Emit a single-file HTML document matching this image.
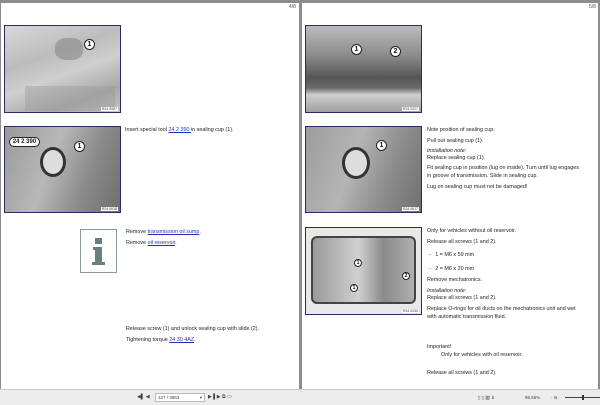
<!DOCTYPE html>
<html><head><style>
*{margin:0;padding:0;box-sizing:border-box}
body{width:600px;height:405px;background:#8c8c8c;position:relative;overflow:hidden;font-family:"Liberation Sans",sans-serif;font-size:5.4px;color:#222}
.page{position:absolute;top:3px;height:386px;background:#fff}
.pn{position:absolute;top:4px;font-size:5px;color:#555}
.img{position:absolute;border:1.5px solid #2b2b66;overflow:hidden}
.lab{position:absolute;right:2px;bottom:1px;background:#fff;font-size:3.5px;padding:0 1px;color:#333}
.c{position:absolute;width:11px;height:11px;border-radius:50%;background:#fff;border:1px solid #222;font:bold 7px "Liberation Sans",sans-serif;text-align:center;line-height:9px;color:#111}
.t{position:absolute;line-height:7px;white-space:nowrap}
a{color:#2233bb;text-decoration:underline}
.tb{position:absolute;left:0;top:389px;width:600px;height:16px;background:#ececec;border-top:1px solid #ccc;font-size:4.5px;color:#444}
</style></head><body>
<div class="page" style="left:1px;width:298px"></div>
<div class="page" style="left:302px;width:296px"></div>
<div class="pn" style="left:289px">4/8</div>
<div class="pn" style="left:589px">5/8</div>

<div class="img" style="left:4px;top:25px;width:117px;height:88px;background:linear-gradient(160deg,#d8d8d8 0%,#bcbcbc 35%,#cfcfcf 55%,#a8a8a8 80%,#c4c4c4 100%)">
<div style="position:absolute;left:50px;top:12px;width:28px;height:22px;background:#888;border-radius:40%;opacity:.6"></div>
<div style="position:absolute;left:20px;top:60px;width:90px;height:25px;background:#999;opacity:.4"></div>
<div class="c" style="left:79px;top:13px">1</div><div class="lab">R24 0587</div></div>
<div class="img" style="left:4px;top:126px;width:117px;height:87px;background:linear-gradient(110deg,#9a9a9a 0%,#b8b8b8 40%,#8a8a8a 70%,#6e6e6e 100%)">
<div style="position:absolute;left:35px;top:20px;width:26px;height:30px;background:#ddd;border-radius:50%;border:3px solid #333"></div>
<div style="position:absolute;left:4px;top:10px;width:31px;height:10px;background:#fff;border:1px solid #222;border-radius:5px;font:bold 6px 'Liberation Sans';text-align:center;line-height:8px">24 2 390</div>
<div class="c" style="left:69px;top:14px">1</div><div class="lab">R24 0618</div></div>

<div class="img" style="left:305px;top:25px;width:117px;height:88px;background:linear-gradient(180deg,#bdbdbd 0%,#8a8a8a 35%,#555 60%,#6a6a6a 72%,#cfcfcf 80%,#a0a0a0 100%)">
<div class="c" style="left:45px;top:18px">1</div><div class="c" style="left:84px;top:20px">2</div><div class="lab">R24 0227</div></div>
<div class="img" style="left:305px;top:126px;width:117px;height:87px;background:linear-gradient(110deg,#9c9c9c 0%,#b5b5b5 40%,#8c8c8c 70%,#707070 100%)">
<div style="position:absolute;left:36px;top:20px;width:28px;height:32px;background:#ddd;border-radius:50%;border:3px solid #333"></div>
<div class="c" style="left:70px;top:13px">1</div><div class="lab">R24 0617</div></div>
<div class="img" style="left:305px;top:227px;width:117px;height:88px;background:#e8e8e8">
<div style="position:absolute;left:5px;top:8px;width:105px;height:68px;background:linear-gradient(90deg,#9a9a9a,#d0d0d0 45%,#8a8a8a 70%,#b0b0b0);border:2px solid #444;border-radius:6px"></div>
<div class="c" style="left:48px;top:31px;width:8px;height:8px;font-size:5px;line-height:6px">1</div>
<div class="c" style="left:44px;top:56px;width:8px;height:8px;font-size:5px;line-height:6px">1</div>
<div class="c" style="left:96px;top:44px;width:8px;height:8px;font-size:5px;line-height:6px">2</div>
<div class="lab">R24 0230</div></div>

<div class="t" style="left:125px;top:127px">Insert special tool <a>24 2 390 </a>in sealing cup (1).</div>

<div style="position:absolute;left:80px;top:229px;width:37px;height:44px;border:1.5px solid #8a9a9a;background:#fff">
<div style="position:absolute;left:14px;top:8px;width:7px;height:6px;background:#6a8080"></div>
<div style="position:absolute;left:12px;top:17px;width:9px;height:3px;background:#6a8080"></div>
<div style="position:absolute;left:14px;top:17px;width:7px;height:17px;background:#6a8080"></div>
<div style="position:absolute;left:11px;top:32px;width:13px;height:3px;background:#6a8080"></div></div>
<div class="t" style="left:126px;top:229px">Remove <a>transmission oil sump</a>.</div>
<div class="t" style="left:126px;top:240px">Remove <a>oil reservoir</a>.</div>
<div class="t" style="left:126px;top:326px">Release screw (1) and unlock sealing cup with slide (2).</div>
<div class="t" style="left:126px;top:337px">Tightening torque <a>24 30 4AZ</a>.</div>

<div class="t" style="left:427px;top:127px">Note position of sealing cup.</div>
<div class="t" style="left:427px;top:138px">Pull out sealing cup (1).</div>
<div class="t" style="left:427px;top:148px"><i>Installation note:</i></div>
<div class="t" style="left:427px;top:155px">Replace sealing cup (1).</div>
<div class="t" style="left:427px;top:165px">Fit sealing cup in position (lug on inside). Turn until lug engages</div>
<div class="t" style="left:427px;top:173px">in groove of transmission. Slide in sealing cup.</div>
<div class="t" style="left:427px;top:184px">Lug on sealing cup must not be damaged!</div>

<div class="t" style="left:427px;top:228px">Only for vehicles without oil reservoir.</div>
<div class="t" style="left:427px;top:239px">Release all screws (1 and 2).</div>
<div class="t" style="left:429px;top:252px">-&nbsp;&nbsp;&nbsp;1 = M6 x 59 mm</div>
<div class="t" style="left:429px;top:266px">-&nbsp;&nbsp;&nbsp;2 = M6 x 20 mm</div>
<div class="t" style="left:427px;top:277px">Remove mechatronics.</div>
<div class="t" style="left:427px;top:288px"><i>Installation note:</i></div>
<div class="t" style="left:427px;top:295px">Replace all screws (1 and 2).</div>
<div class="t" style="left:427px;top:306px">Replace O-rings for oil ducts on the mechatronics unit and wet</div>
<div class="t" style="left:427px;top:314px">with automatic transmission fluid.</div>
<div class="t" style="left:427px;top:344px">Important!</div>
<div class="t" style="left:441px;top:352px">Only for vehicles with oil reservoir.</div>
<div class="t" style="left:427px;top:370px">Release all screws (1 and 2).</div>

<div class="tb">
<div class="t" style="left:137px;top:4px;font-size:5px">◀▌ ◀</div>
<div style="position:absolute;left:155px;top:3px;width:50px;height:9px;background:#fff;border:1px solid #bbb;padding-left:2px;line-height:7px">127 / 3863 <span style="position:absolute;right:2px">▾</span></div>
<div class="t" style="left:208px;top:4px;font-size:5px">▶ ▌▶ ⧉ ▭</div>
<div class="t" style="left:478px;top:4px">▯ ▯ <span style="background:#cde">▥</span> ⇟</div>
<div class="t" style="left:525px;top:4px">86.55%</div>
<div class="t" style="left:551px;top:4px">· ⊖</div>
<div style="position:absolute;left:565px;top:7px;width:35px;height:1px;background:#444"></div>
<div style="position:absolute;left:582px;top:5px;width:2px;height:5px;background:#333"></div>
</div>
</body></html>
